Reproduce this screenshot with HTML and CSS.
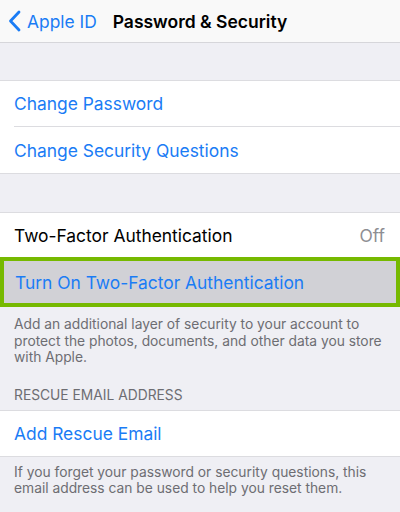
FILE: index.html
```html
<!DOCTYPE html>
<html>
<head>
<meta charset="utf-8">
<link rel="stylesheet" href="styles.css">
</head>
<body>
<div class="screen">
  <header class="nav">
    <div class="back">
      <svg class="chev" width="13" height="22" viewBox="0 0 13 22"><path d="M11 2 L2.5 11 L11 20" fill="none" stroke="#1a7cf5" stroke-width="2.8" stroke-linecap="round" stroke-linejoin="round"/></svg>
      <span>Apple ID</span>
    </div>
    <div class="title">Password &amp; Security</div>
  </header>

  <div class="gap"></div>
  <section class="group">
    <div class="row link">Change Password</div>
    <div class="row link">Change Security Questions</div>
  </section>

  <div class="gap gap-2"></div>
  <section class="group group-tfa">
    <div class="row row-tfa"><span>Two-Factor Authentication</span><span class="value">Off</span></div>
    <div class="row link highlight">Turn On Two-Factor Authentication</div>
  </section>
  <p class="footer first">Add an additional layer of security to your account to protect the photos, documents, and other data you store with Apple.</p>

  <div class="header">RESCUE EMAIL ADDRESS</div>
  <section class="group">
    <div class="row link row-single">Add Rescue Email</div>
  </section>
  <p class="footer">If you forget your password or security questions, this email address can be used to help you reset them.</p>
</div>
</body>
</html>
```
FILE: styles.css
```css
html, body {
  margin: 0;
  padding: 0;
}
body {
  background: #efeff4;
  font-family: Inter, "Noto Sans", sans-serif;
  width: 400px;
  height: 512px;
  overflow: hidden;
}
.screen {
  display: flex;
  flex-direction: column;
}
.nav {
  height: 42px;
  background: #f9f9f9;
  border-bottom: 1px solid #d6d6da;
  display: flex;
  align-items: center;
  justify-content: center;
  position: relative;
}
.back {
  position: absolute;
  left: 8px;
  top: 0;
  height: 42px;
  display: flex;
  align-items: center;
  gap: 6px;
  color: #1a7cf5;
  font-size: 17.4px;
}
.title {
  font-size: 17.5px;
  font-weight: 600;
  color: #000;
}
.gap {
  height: 37px;
}
.gap-2 {
  height: 38px;
}
.group {
  background: #fff;
  border-top: 1px solid #dcdce0;
  border-bottom: 1px solid #dcdce0;
}
.row {
  height: 45px;
  margin-left: 14px;
  padding-right: 15px;
  display: flex;
  align-items: center;
  justify-content: space-between;
  font-size: 17.4px;
  color: #000;
}
.row:last-child {
  height: 46px;
}
.row + .row {
  border-top: 1px solid #dcdce0;
}
.row.row-single {
  height: 45px;
}
.link {
  color: #1a7cf5;
}
.value {
  color: #8e8e93;
}
.group-tfa {
  border-bottom: none;
}
.row.row-tfa {
  height: 44px;
}
.row.highlight,
.row + .row.highlight {
  margin-left: 0;
  padding-left: 11px;
  height: 42px;
  background: #d1d1d6;
  border: 4px solid #76b900;
}
.footer {
  margin: 0;
  padding: 7px 14px 0;
  font-size: 13.8px;
  line-height: 16.5px;
  color: #6d6d72;
}
.footer.first {
  padding-top: 9px;
}
.header {
  padding: 21px 14px 7px;
  font-size: 13.8px;
  line-height: 16px;
  color: #6d6d72;
}
```
